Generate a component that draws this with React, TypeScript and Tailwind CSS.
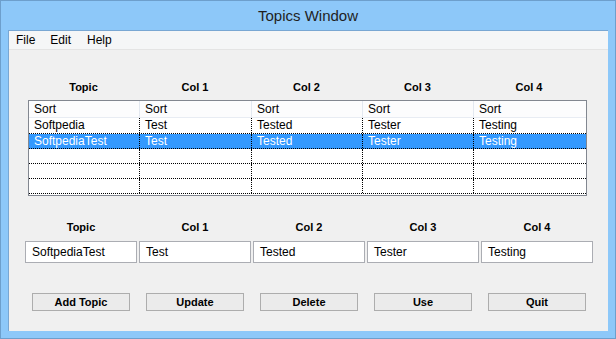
import React from 'react';

const COLS = ['Topic', 'Col 1', 'Col 2', 'Col 3', 'Col 4'];
const WIDTHS = ['w-[111px]', 'w-[112px]', 'w-[111px]', 'w-[111px]', 'w-[112px]'];

const ROWS: { cells: string[]; selected?: boolean }[] = [
  { cells: ['Softpedia', 'Test', 'Tested', 'Tester', 'Testing'] },
  { cells: ['SoftpediaTest', 'Test', 'Tested', 'Tester', 'Testing'], selected: true },
  { cells: ['', '', '', '', ''] },
  { cells: ['', '', '', '', ''] },
  { cells: ['', '', '', '', ''] },
];

const FIELDS = ['SoftpediaTest', 'Test', 'Tested', 'Tester', 'Testing'];
const BUTTONS = ['Add Topic', 'Update', 'Delete', 'Use', 'Quit'];

export default function App() {
  return (
    <div
      className="w-[616px] h-[339px] bg-[#8dc8f9] border border-[#6d9fcc] flex flex-col overflow-hidden"
      style={{ fontFamily: '"Segoe UI", "Liberation Sans", Arial, sans-serif' }}
    >
      {/* Title bar */}
      <div className="h-[29px] flex items-center justify-center text-[15px] text-[#1f1f1f] pt-[1px]">
        Topics Window
      </div>

      <div className="flex-1 flex px-[7px] pb-[7px]">
        <div className="flex-1 flex flex-col bg-[#f0f0f0] border border-[#79a7d3] border-b-0 border-r-0">
          {/* Menu bar */}
          <div className="h-[19px] bg-[#f5f6f7] border-b border-[#e4e4e4] flex items-center text-[12px] text-black">
            <span className="ml-[7px]">File</span>
            <span className="ml-[15px]">Edit</span>
            <span className="ml-[16px]">Help</span>
          </div>

          {/* Top column labels */}
          <div className="flex ml-[19px] mt-[29px] h-[16px] items-center">
            {COLS.map((c, i) => (
              <div key={c} className={`${WIDTHS[i]} text-center text-[11px] font-bold text-black`}>
                {c}
              </div>
            ))}
          </div>

          {/* List view */}
          <div className="ml-[19px] mt-[5px] w-[559px] h-[96px] bg-white border border-[#828790] overflow-hidden text-[12px]">
            <div className="flex h-[17px] bg-[#fcfcfd] border-b border-[#e8ecf3]">
              {COLS.map((_, i) => (
                <div
                  key={i}
                  className={`${WIDTHS[i]} pl-[5px] leading-[17px] text-black ${i < 4 ? 'border-r border-[#e3e8f0]' : ''}`}
                >
                  Sort
                </div>
              ))}
            </div>
            {ROWS.map((r, ri) => (
              <div
                key={ri}
                className={`flex ${ri === 0 ? 'h-[16px]' : 'h-[15px]'} border-b border-dotted border-black ${r.selected ? 'bg-[#3399ff] text-white' : 'text-black'}`}
              >
                {r.cells.map((v, i) => (
                  <div
                    key={i}
                    className={`${WIDTHS[i]} pl-[5px] leading-[14px] ${i < 4 ? 'border-r border-dotted border-black' : ''}`}
                  >
                    {v}
                  </div>
                ))}
              </div>
            ))}
          </div>

          {/* Bottom column labels */}
          <div className="flex ml-[16px] mt-[23px] h-[16px] items-center gap-[2px]">
            {COLS.map(c => (
              <div key={c} className="w-[112px] text-center text-[11px] font-bold text-black">
                {c}
              </div>
            ))}
          </div>

          {/* Edit fields */}
          <div className="flex ml-[16px] mt-[6px] gap-[2px]">
            {FIELDS.map((f, i) => (
              <div
                key={i}
                className="w-[112px] h-[22px] bg-white border border-[#abadb3] pl-[6px] text-[12px] leading-[20px] text-black"
              >
                {f}
              </div>
            ))}
          </div>

          {/* Buttons */}
          <div className="flex ml-[23px] mt-[30px] gap-[16px]">
            {BUTTONS.map(b => (
              <div
                key={b}
                className="w-[98px] h-[18px] bg-[#ebebeb] border border-[#adadad] flex items-center justify-center text-[11px] font-bold text-black"
              >
                {b}
              </div>
            ))}
          </div>
        </div>
      </div>
    </div>
  );
}
